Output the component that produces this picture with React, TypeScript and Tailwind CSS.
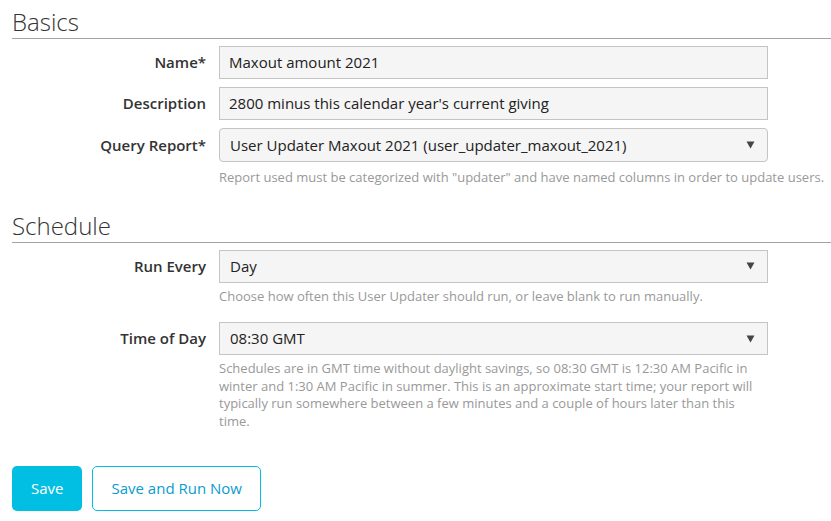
const font = { fontFamily: '"Open Sans", "Noto Sans", Arial, sans-serif' };

function SectionHeading({ title, className }: { title: string; className?: string }) {
	return (
		<h2
			className={`border-b border-[#a3a3a3] text-[24px] font-light leading-[32px] text-[#333] ${className ?? ""}`}
		>
			{title}
		</h2>
	);
}

function Caret() {
	return (
		<svg width="9" height="8" viewBox="0 0 9 8" className="shrink-0">
			<path d="M0.5 0.5h8L4.5 7.5z" fill="#444" />
		</svg>
	);
}

type RowProps = {
	label: string;
	value: string;
	select?: boolean;
	rounded?: boolean;
	help?: React.ReactNode;
	helpClass?: string;
	className?: string;
};

function FieldRow({ label, value, select, rounded, help, helpClass, className }: RowProps) {
	return (
		<div className={`flex items-start gap-[13px] ${className ?? ""}`}>
			<label
				className={`flex w-[194px] shrink-0 items-center justify-end text-[15px] font-semibold text-[#333] ${rounded ? "h-[34px]" : "h-[33px]"}`}
			>
				{label}
			</label>
			<div className="w-[549px] shrink-0">
				<div
					className={`flex items-center justify-between border border-[#c4c4c4] bg-[#f5f5f5] pl-[9px] pr-[12px] text-[15px] text-[#222] ${rounded ? "h-[34px] rounded-[4px]" : "h-[33px]"} ${select ? "pl-[10px]" : ""}`}
				>
					<span>{value}</span>
					{select && <Caret />}
				</div>
				{help && (
					<p className={`mt-[5px] text-[13px] leading-[17.5px] text-[#999] ${helpClass ?? ""}`}>
						{help}
					</p>
				)}
			</div>
		</div>
	);
}

export default function App() {
	return (
		<div className="min-h-[521px] w-[831px] bg-white px-3 pt-[6px]" style={font}>
			<SectionHeading title="Basics" className="-mr-3" />
			<div className="mt-[7px] flex flex-col gap-[8px]">
				<FieldRow label="Name*" value="Maxout amount 2021" />
				<FieldRow label="Description" value="2800 minus this calendar year's current giving" />
				<FieldRow
					label="Query Report*"
					value="User Updater Maxout 2021 (user_updater_maxout_2021)"
					select
					rounded
					help={'Report used must be categorized with "updater" and have named columns in order to update users.'}
					helpClass="whitespace-nowrap !mt-[7px]"
				/>
			</div>

			<SectionHeading title="Schedule" className="-mr-3 mt-[23px]" />
			<div className="mt-[7px] flex flex-col">
				<FieldRow
					label="Run Every"
					value="Day"
					select
					help="Choose how often this User Updater should run, or leave blank to run manually."
				/>
				<FieldRow
					className="mt-[17px]"
					label="Time of Day"
					value="08:30 GMT"
					select
					help="Schedules are in GMT time without daylight savings, so 08:30 GMT is 12:30 AM Pacific in winter and 1:30 AM Pacific in summer. This is an approximate start time; your report will typically run somewhere between a few minutes and a couple of hours later than this time."
				/>
			</div>

			<div className="mt-[36px] flex gap-[10px]">
				<button className="h-[45px] rounded-[5px] bg-[#00bfe2] px-[19px] text-[15px] text-white">
					Save
				</button>
				<button className="h-[45px] rounded-[5px] border border-[#00bfe2] bg-white px-[18px] text-[15px] text-[#0b9ccd]">
					Save and Run Now
				</button>
			</div>
		</div>
	);
}
